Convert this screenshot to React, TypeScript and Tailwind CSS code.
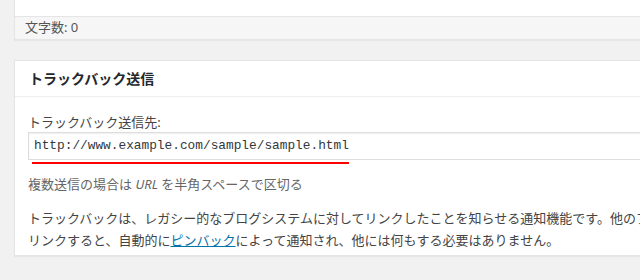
export default function App() {
    return (
        <div
            className="h-[280px] w-[640px] overflow-hidden bg-[#f1f1f1] pl-[14px]"
            style={{ fontFamily: '"Noto Sans", "Noto Sans CJK JP", sans-serif' }}
        >
            {/* EDITOR BOX (cut at top) */}
            <div className="w-[720px] border-x border-b border-[#e5e5e5] bg-white shadow-[0_1px_1px_rgba(0,0,0,0.04)]">
                <div className="h-[16px]" />
                <div className="flex h-[23px] items-center border-t border-[#e5e5e5] bg-[#f6f6f6] pl-[10px] text-[13px] text-[#555]">
                    文字数: 0
                </div>
            </div>

            {/* TRACKBACK BOX */}
            <div className="mt-[20px] w-[720px] border border-[#e5e5e5] bg-white shadow-[0_1px_1px_rgba(0,0,0,0.04)]">
                <div className="flex h-[36px] items-center border-b border-[#eeeeee] pl-[14px] text-[14px] font-semibold text-[#23282d]">
                    トラックバック送信
                </div>

                <div className="pl-[13px] pt-[15px] pb-[4px]">
                    <p className="h-[20px] text-[13px] leading-[20px] text-[#444]">
                        トラックバック送信先:
                    </p>

                    <div className="flex h-[28px] w-[700px] items-center border border-[#dddddd] bg-white pl-[5px] shadow-[inset_0_1px_2px_rgba(0,0,0,0.07)]">
                        <span
                            className="text-[12.8px] text-[#32373c]"
                            style={{ fontFamily: '"Liberation Mono", monospace' }}
                        >
                            http://www.example.com/sample/sample.html
                        </span>
                    </div>

                    <div className="ml-[4px] mt-[2px] h-[2px] w-[317px] bg-[#ff0000]" />

                    <p className="mt-[10px] h-[20px] text-[13px] leading-[20px] text-[#666]">
                        複数送信の場合は <i>URL</i> を半角スペースで区切る
                    </p>

                    <p className="mt-[13px] whitespace-nowrap text-[13px] leading-[22px] text-[#444]">
                        トラックバックは、レガシー的なブログシステムに対してリンクしたことを知らせる通知機能です。他のブログに
                        <br />
                        リンクすると、自動的に
                        <a className="text-[#0073aa] underline">ピンバック</a>
                        によって通知され、他には何もする必要はありません。
                    </p>
                </div>
            </div>
        </div>
    );
}
